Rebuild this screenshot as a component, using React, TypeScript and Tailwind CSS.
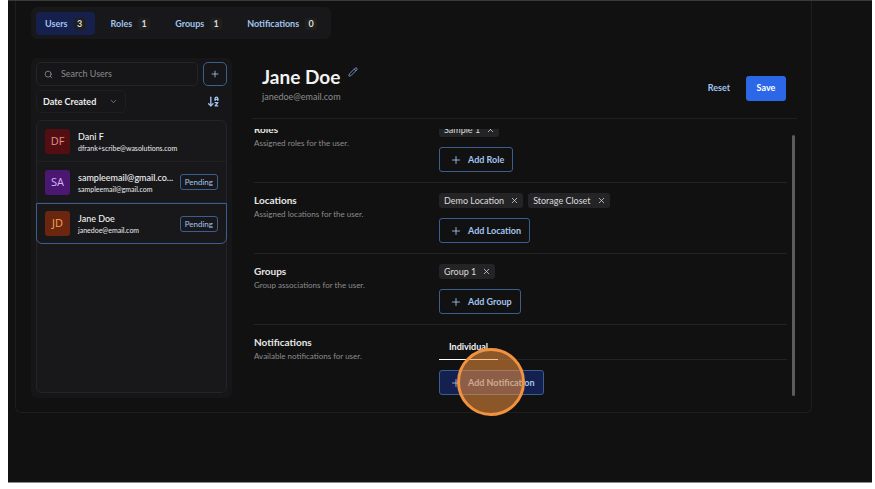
import { useState, type ReactNode } from 'react';
import { ArrowDownAZ, ChevronDown, Pencil, Plus, Search, X } from 'lucide-react';
import clsx from 'clsx';

const TABS = [
  { label: 'Users', count: 3 },
  { label: 'Roles', count: 1 },
  { label: 'Groups', count: 1 },
  { label: 'Notifications', count: 0 },
];

interface User {
  initials: string;
  name: string;
  email: string;
  avatar: string;
  pending: boolean;
}

const USERS: User[] = [
  {
    initials: 'DF',
    name: 'Dani F',
    email: 'dfrank+scribe@wasolutions.com',
    avatar: 'bg-[#520e10] text-[#e88f8f]',
    pending: false,
  },
  {
    initials: 'SA',
    name: 'sampleemail@gmail.co...',
    email: 'sampleemail@gmail.com',
    avatar: 'bg-[#4a1772] text-[#d9b4fa]',
    pending: true,
  },
  {
    initials: 'JD',
    name: 'Jane Doe',
    email: 'janedoe@email.com',
    avatar: 'bg-[#6b2610] text-[#f5a65a]',
    pending: true,
  },
];

function Tabs() {
  const [active, setActive] = useState('Users');

  return (
    <nav className="flex w-fit gap-[7px] rounded-md bg-[#18181a] p-[5px] pb-1">
      {TABS.map((tab) => (
        <button
          key={tab.label}
          type="button"
          onClick={() => setActive(tab.label)}
          className={clsx(
            'flex h-[23px] items-center gap-1.5 rounded-sm px-[9px] text-[9px] font-bold text-[#a3c4ee]',
            active === tab.label && 'bg-[#15204c]',
          )}
        >
          {tab.label}
          <span className="flex h-3 w-3 items-center justify-center rounded-[3px] bg-[#1f1f20] text-[9px] text-[#dcdcd4]">
            {tab.count}
          </span>
        </button>
      ))}
    </nav>
  );
}

/** Left column: search, sort order and the list of users. */
function UserList() {
  const [selected, setSelected] = useState('Jane Doe');

  return (
    <aside className="flex w-[201px] shrink-0 flex-col rounded-md bg-[#161618] px-[5px] py-1">
      <div className="flex gap-[5px]">
        <label className="flex h-6 min-w-0 flex-1 items-center gap-2 rounded-[5px] border border-[#252527] px-[7px] text-[#9a9a9c]">
          <Search className="size-[9px] shrink-0" />
          <input
            type="search"
            aria-label="Search users"
            placeholder="Search Users"
            className="w-full min-w-0 bg-transparent text-[9px] text-[#e4e4e7] outline-none placeholder:text-[#8a8a8d]"
          />
        </label>
        <button
          type="button"
          aria-label="Add user"
          className="flex size-6 items-center justify-center rounded-[5px] border border-[#3a5f8f] text-[#a3c4ee]"
        >
          <Plus className="size-[10px]" />
        </button>
      </div>
      <div className="mt-1 flex items-center justify-between pr-[7px]">
        <div className="relative flex">
          <select
            aria-label="Sort users by"
            className="h-[23px] w-[90px] appearance-none rounded-[5px] border border-[#1e1e20] bg-transparent pl-1.5 text-[9px] font-bold text-[#ececec]"
          >
            <option>Date Created</option>
            <option>Name</option>
          </select>
          <ChevronDown className="pointer-events-none absolute top-[7px] right-2 size-[9px] text-[#8f8f92]" />
        </div>
        <button type="button" aria-label="Sort direction" className="text-[#a3c4ee]">
          <ArrowDownAZ className="size-[13px]" strokeWidth={2.5} />
        </button>
      </div>
      <ul className="mt-[7px] mb-[1px] flex-1 rounded-md border border-[#252527] bg-[#18181b]">
        {USERS.map((user) => (
          <li key={user.name}>
            <button
              type="button"
              onClick={() => setSelected(user.name)}
              className={clsx(
                'flex h-[41px] items-center gap-2 text-left',
                selected === user.name
                  ? '-mx-px w-[calc(100%+2px)] rounded-b-md border border-[#3a5f8f] px-2'
                  : 'w-full border-b border-[#202022] px-2',
              )}
            >
              <span
                className={clsx(
                  "flex size-[25px] shrink-0 items-center justify-center rounded-[3px] font-['Open_Sans',sans-serif] text-[11px]",
                  user.avatar,
                )}
              >
                {user.initials}
              </span>
              <span className="min-w-0 flex-1">
                <span className="block text-[9px] leading-[13px] font-medium whitespace-nowrap text-[#f2f2f2]">
                  {user.name}
                </span>
                <span className="block text-[7px] leading-[10px] whitespace-nowrap text-[#ececec]">
                  {user.email}
                </span>
              </span>
              {user.pending && (
                <span className="flex h-4 items-center rounded-[3px] border border-[#3a5f8f] px-1 text-[8px] text-[#a3c4ee]">
                  Pending
                </span>
              )}
            </button>
          </li>
        ))}
      </ul>
    </aside>
  );
}

function Section({
  title,
  description,
  children,
}: {
  title: string;
  description: string;
  children: ReactNode;
}) {
  return (
    <section className="flex border-t border-[#232324] py-2.5">
      <div className="w-[185px] shrink-0">
        <h2 className="text-[10px] leading-[15px] font-bold text-[#e6e6e6]">{title}</h2>
        <p className="text-[8px] leading-[13px] text-[#8c8c8e]">{description}</p>
      </div>
      <div className="flex min-w-0 flex-1 flex-col items-start gap-2.5">{children}</div>
    </section>
  );
}

function Chips({ items }: { items: string[] }) {
  return (
    <ul className="flex gap-[5px]">
      {items.map((item) => (
        <li
          key={item}
          className="flex h-[15px] items-center gap-1.5 rounded-[3px] bg-[#242426] pr-1 pl-[5px] text-[9px] text-[#dcdcdc]"
        >
          {item}
          <button type="button" aria-label={`Remove ${item}`}>
            <X className="size-[9px]" />
          </button>
        </li>
      ))}
    </ul>
  );
}

function AddButton({ label, active = false }: { label: string; active?: boolean }) {
  return (
    <button
      type="button"
      className={clsx(
        'flex h-[25px] items-center gap-1.5 rounded-[3px] border border-[#3a5f8f] pr-2 pl-2.5 text-[9px] font-bold text-[#a3c4ee]',
        active && 'bg-[#14204f]',
      )}
    >
      <Plus className="size-3" strokeWidth={1.75} />
      {label}
    </button>
  );
}

function UserDetails() {
  return (
    <main className="ml-5 flex min-w-0 flex-1 flex-col">
      <header className="flex h-[61px] shrink-0 items-center justify-between border-b border-[#202021] pr-[11px] pl-2.5">
        <div className="pb-1.5">
          <div className="flex items-start gap-2">
            <h1 className="text-[19px] leading-6 font-bold text-[#f2f2f2]">Jane Doe</h1>
            <button type="button" aria-label="Edit name" className="mt-0.5 text-[#7ba3d6]">
              <Pencil className="size-[10px]" />
            </button>
          </div>
          <p className="text-[9px] leading-4 text-[#8c8c8e]">janedoe@email.com</p>
        </div>
        <div className="flex items-center gap-4 text-[9px] font-bold">
          <button type="button" className="text-[#a3c4ee]">
            Reset
          </button>
          <button type="button" className="h-[25px] w-10 rounded-[3px] bg-[#2c67e8] text-white">
            Save
          </button>
        </div>
      </header>
      <div className="relative mt-2.5 flex min-h-0 flex-1">
        {/* scrolled to the end, so the first section is cut off at the top */}
        <div className="flex min-h-0 min-w-0 flex-1 flex-col justify-end overflow-hidden pl-0.5">
          <Section title="Roles" description="Assigned roles for the user.">
            <Chips items={['Sample 1']} />
            <AddButton label="Add Role" />
          </Section>
          <Section title="Locations" description="Assigned locations for the user.">
            <Chips items={['Demo Location', 'Storage Closet']} />
            <AddButton label="Add Location" />
          </Section>
          <Section title="Groups" description="Group associations for the user.">
            <Chips items={['Group 1']} />
            <AddButton label="Add Group" />
          </Section>
          <section className="flex border-t border-[#232324] pt-2.5 pb-[3px]">
            <div className="w-[185px] shrink-0">
              <h2 className="text-[10px] leading-[15px] font-bold text-[#e6e6e6]">
                Notifications
              </h2>
              <p className="text-[8px] leading-[13px] text-[#8c8c8e]">
                Available notifications for user.
              </p>
            </div>
            <div className="flex min-w-0 flex-1 flex-col items-start gap-2.5">
              <div className="flex w-full border-b border-[#232324]">
                <button
                  type="button"
                  className="-mb-px h-[25px] border-b border-white px-2.5 text-[9px] font-bold text-[#f2f2f2]"
                >
                  Individual
                </button>
              </div>
              <AddButton label="Add Notification" active />
            </div>
          </section>
        </div>
        <div className="mt-1.5 mr-0.5 mb-0.5 ml-[5px] w-[3px] rounded-full bg-[#5c5c5c]" />
        {/* click highlight */}
        <span className="pointer-events-none absolute -bottom-[18px] left-[205px] size-[68px] rounded-full border-[3px] border-[#f0923e] bg-[#f0923e]/55" />
      </div>
    </main>
  );
}

export default function App() {
  return (
    <div className="flex h-screen flex-col bg-white pr-[3px] pb-1.5 pl-2 font-['Lato',sans-serif]">
      <div className="flex min-h-0 flex-1 flex-col border-t border-b border-t-[#3a3a3a] border-b-[#8a8a8a] bg-[#111111]">
        <div className="mr-[60px] mb-[69px] ml-[7px] flex min-h-0 flex-1 flex-col gap-[19px] rounded-b-md border-x border-b border-[#1e1e1f] pt-1.5 pr-3.5 pb-3.5 pl-[15px]">
          <Tabs />
          <div className="flex min-h-0 flex-1">
            <UserList />
            <UserDetails />
          </div>
        </div>
      </div>
    </div>
  );
}
